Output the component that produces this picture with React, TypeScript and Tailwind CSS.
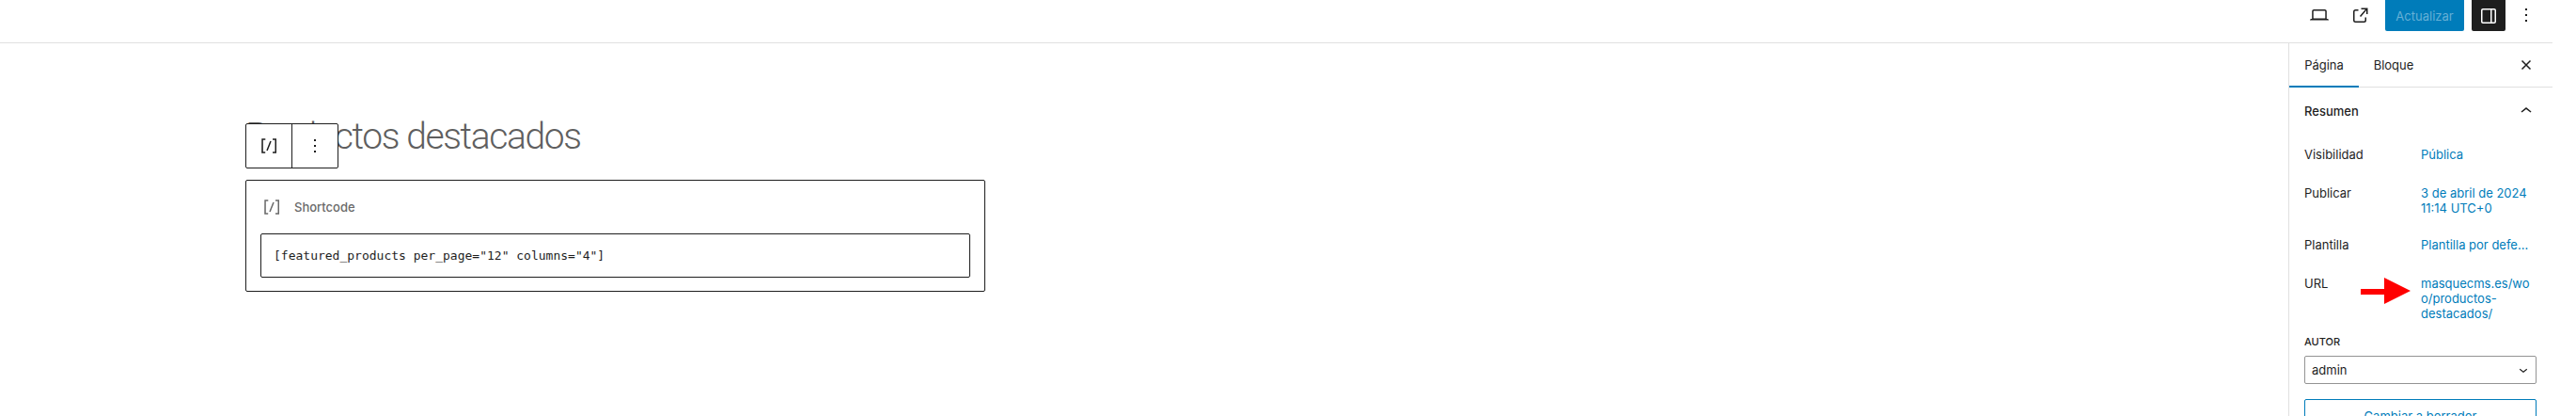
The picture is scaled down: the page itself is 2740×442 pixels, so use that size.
import { useState } from "react";

const inter = "font-['Inter',sans-serif]";

function BlockIcon({ className }: { className?: string }) {
  return (
    <svg viewBox="0 0 24 24" width="24" height="24" className={className} fill="currentColor">
      <path d="M16 4.2v1.5h2.5v12.5H16v1.5h4V4.2h-4zM4.2 19.8h4v-1.5H5.8V5.8h2.5V4.2h-4l-.1 15.6zm5.1-3.1l1.4.6 4-10-1.4-.6-4 10z" />
    </svg>
  );
}

function DotsIcon() {
  return (
    <svg viewBox="0 0 24 24" width="24" height="24" fill="currentColor">
      <path d="M13 19h-2v-2h2v2zm0-6h-2v-2h2v2zm0-6h-2V5h2v2z" />
    </svg>
  );
}

function Row({ label, children, className }: { label: string; children: React.ReactNode; className?: string }) {
  return (
    <div className={`flex ${className ?? ""}`}>
      <div className="w-[124px] shrink-0 text-[#1e1e1e]">{label}</div>
      <div className="w-[116px] text-[#007cba] [overflow-wrap:anywhere]">{children}</div>
    </div>
  );
}

export default function App() {
  const [tab, setTab] = useState("page");

  return (
    <div className={`h-[442px] w-[2740px] overflow-hidden bg-white text-[13px] leading-4 text-[#1e1e1e] ${inter}`}>
      <div className="w-[2715px]">
        {/* Top bar */}
        <header className="flex h-[46px] items-start justify-end border-b border-[#e0e0e0] pr-[16px]">
          <button className="mt-[4px] mr-[20px] text-[#1e1e1e]">
            <svg viewBox="0 0 24 24" width="24" height="24" fill="currentColor">
              <path d="M20.5 16h-.7V8c0-1.1-.9-2-2-2H6.2c-1.1 0-2 .9-2 2v8h-.7c-.8 0-1.5.7-1.5 1.5h20c0-.8-.7-1.5-1.5-1.5zM5.7 8c0-.3.2-.5.5-.5h11.6c.3 0 .5.2.5.5v7.6H5.7V8z" />
            </svg>
          </button>
          <button className="mt-[4px] mr-[14px] text-[#1e1e1e]">
            <svg viewBox="0 0 24 24" width="24" height="24" fill="currentColor">
              <path d="M19.5 4.5h-7V6h4.44l-5.97 6.97 1.14.98L18 7.03V11h1.5V4.5zM6.5 6h3v1.5h-3a1 1 0 0 0-1 1v9a1 1 0 0 0 1 1h9a1 1 0 0 0 1-1v-3H18v3a2.5 2.5 0 0 1-2.5 2.5h-9A2.5 2.5 0 0 1 4 17.5v-9A2.5 2.5 0 0 1 6.5 6z" />
            </svg>
          </button>
          <button className="h-[33px] w-[84px] rounded-b-[2px] bg-[#007cba] text-[#66b0d6]">Actualizar</button>
          <button className="ml-[8px] flex h-[33px] w-[36px] items-center justify-center rounded-b-[2px] bg-[#1e1e1e] text-white">
            <svg viewBox="0 0 24 24" width="24" height="24" fill="currentColor">
              <path d="M18 4H6c-1.1 0-2 .9-2 2v12c0 1.1.9 2 2 2h12c1.1 0 2-.9 2-2V6c0-1.1-.9-2-2-2zM5.5 18V6c0-.3.2-.5.5-.5h8v13H6c-.3 0-.5-.2-.5-.5zm13 0c0 .3-.2.5-.5.5h-2.5v-13H18c.3 0 .5.2.5.5v12z" />
            </svg>
          </button>
          <button className="ml-[10px] mt-[4px] text-[#1e1e1e]">
            <DotsIcon />
          </button>
        </header>

        <div className="flex h-[396px]">
          {/* Editor canvas */}
          <main className="flex-1 pl-[261px] pt-[69px]">
            <div className="relative w-[787px]">
              <h1 className="h-[76px] whitespace-nowrap font-['Roboto',sans-serif] text-[39px] font-light leading-[60px] tracking-[-1.4px] text-[#5f5f5f]">
                Productos destacados
              </h1>
              <div className="absolute left-0 top-[16px] flex h-[48px] w-[99px] rounded-[2px] border border-[#1e1e1e] bg-white text-[#1e1e1e]">
                <div className="flex w-[49px] items-center justify-center border-r border-[#1e1e1e]">
                  <BlockIcon />
                </div>
                <div className="flex flex-1 items-center justify-center">
                  <DotsIcon />
                </div>
              </div>
              <div className="h-[119px] rounded-[2px] border border-[#1e1e1e] px-[15px] pt-[15px]">
                <div className="flex h-[26px] items-center text-[#6a6a6a]">
                  <BlockIcon />
                  <span className="ml-[12px] text-[13px] font-medium">Shortcode</span>
                </div>
                <div className="mt-[15px] flex h-[47px] items-center rounded-[2px] border border-[#1e1e1e] px-[13px] font-['DejaVu_Sans_Mono',monospace] text-[13px] text-[#1e1e1e]">
                  [featured_products per_page="12" columns="4"]
                </div>
              </div>
            </div>
          </main>

          {/* Settings sidebar */}
          <aside className="w-[281px] border-l border-[#e0e0e0]">
            <div className="flex h-[47px] items-center border-b border-[#e0e0e0]">
              <button
                onClick={() => setTab("page")}
                className={`h-[47px] w-[74px] border-b-2 pt-[1px] ${tab === "page" ? "border-[#007cba]" : "border-transparent"}`}
              >
                Página
              </button>
              <button
                onClick={() => setTab("block")}
                className={`h-[47px] w-[74px] border-b-2 pt-[1px] ${tab === "block" ? "border-[#007cba]" : "border-transparent"}`}
              >
                Bloque
              </button>
              <svg viewBox="0 0 24 24" width="24" height="24" fill="none" stroke="currentColor" strokeWidth="1.5" className="ml-auto mr-[16px]">
                <path d="M7.5 7.5l9 9M16.5 7.5l-9 9" />
              </svg>
            </div>

            <div className="px-[16px] pt-[16px]">
              <div className="flex h-[18px] items-center justify-between font-medium">
                Resumen
                <svg viewBox="0 0 24 24" width="24" height="24" fill="currentColor">
                  <path d="M6.5 12.4L12 8l5.5 4.4-.9 1.2L12 10l-4.5 3.6-1-1.2z" />
                </svg>
              </div>

              <div className="mt-[29px] flex flex-col">
                <Row label="Visibilidad">Pública</Row>
                <Row label="Publicar" className="mt-[25px]">3 de abril de 2024 11:14 UTC+0</Row>
                <Row label="Plantilla" className="mt-[23px]"><span className="whitespace-nowrap">Plantilla por defe…</span></Row>
                <Row label="URL" className="mt-[25px]">masquecms.es/woo/productos-destacados/</Row>
              </div>

              <div className="mt-[14px] text-[11px] font-medium uppercase leading-4">Autor</div>
              <div className="mt-[7px] flex h-[30px] w-[247px] items-center justify-between rounded-[2px] border border-[#949494] pl-[7px] pr-[4px]">
                admin
                <svg viewBox="0 0 24 24" width="18" height="18" fill="currentColor">
                  <path d="M17.5 11.6L12 16l-5.5-4.4.9-1.2L12 14l4.5-3.6 1 1.2z" />
                </svg>
              </div>
              <button className="mt-[16px] h-[36px] w-[247px] rounded-[2px] border border-[#007cba] text-[#007cba]">
                Cambiar a borrador
              </button>
            </div>
          </aside>
        </div>
      </div>

      {/* Red annotation arrow drawn over the screenshot */}
      <svg viewBox="0 0 53 28" width="53" height="28" className="absolute left-[2511px] top-[295px]">
        <path d="M0 12H25V0L53 14L25 28V18H0z" fill="#ff0000" />
      </svg>
    </div>
  );
}
